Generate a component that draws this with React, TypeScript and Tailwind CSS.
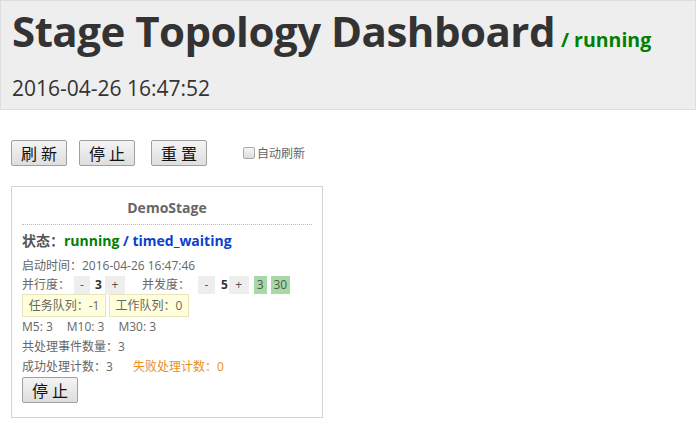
import React from "react";

const font = { fontFamily: '"Open Sans", "Noto Sans CJK SC", sans-serif' };

function Btn({ children, className = "" }: { children: React.ReactNode; className?: string }) {
  return (
    <button
      className={
        "h-[26px] w-[56px] rounded-[2px] border border-[#a0a0a0] bg-gradient-to-b from-[#f4f4f4] to-[#dedede] text-[16px] leading-none tracking-[4px] pl-[4px] text-[#111] " +
        className
      }
      style={{ fontFamily: '"Noto Sans CJK SC", sans-serif' }}
    >
      {children}
    </button>
  );
}

function Mini({ children, className = "", green = false }: { children: React.ReactNode; className?: string; green?: boolean }) {
  return (
    <span
      className={
        "inline-flex h-[18px] items-center justify-center text-[#555] " +
        (green ? "bg-[#a6d9a6] " : "bg-[#eeeeee] ") +
        className
      }
    >
      {children}
    </span>
  );
}

export default function App() {
  return (
    <div className="min-h-[440px] w-[696px] bg-white text-[#333]" style={font}>
      <div className="h-[110px] border border-[#dddddd] bg-[#eeeeee] px-[11px]">
        <div className="flex items-baseline pt-[2px]">
          <span className="text-[42px] font-bold leading-[56px] tracking-[-0.5px] text-[#333]">
            Stage Topology Dashboard
          </span>
          <span className="ml-[6px] text-[19.5px] font-bold text-[#008000]">/ running</span>
        </div>
        <div className="mt-[14px] text-[21px] leading-[30px] text-[#333]">2016-04-26 16:47:52</div>
      </div>

      <div className="mt-[30px] flex items-center pl-[11px]">
        <Btn>刷新</Btn>
        <Btn className="ml-[12px]">停止</Btn>
        <Btn className="ml-[16px]">重置</Btn>
        <label className="ml-[36px] flex items-center text-[12px] text-[#666]" style={{ fontFamily: '"Noto Sans CJK SC", sans-serif' }}>
          <span className="inline-block h-[12px] w-[12px] rounded-[2px] border border-[#aaa] bg-gradient-to-b from-[#f6f6f6] to-[#dcdcdc]" />
          <span className="ml-[2px]">自动刷新</span>
        </label>
      </div>

      <div className="ml-[11px] mt-[20px] h-[232px] w-[312px] border border-[#d4d4d4] px-[10px] pt-[10px] text-[12px] text-[#666]">
        <div className="text-center text-[14px] font-bold leading-[22px] text-[#666]">DemoStage</div>
        <div className="mt-[5px] border-b border-dotted border-[#bbb]" />
        <div className="mt-[5px] text-[14px] font-bold leading-[20px]">
          <span className="text-[#555]" style={{ fontFamily: '"Noto Sans CJK SC", sans-serif' }}>状态：</span>
          <span className="text-[#008000]">running</span>
          <span className="text-[#0b3fcc]"> / timed_waiting</span>
        </div>
        <div className="mt-[5px] leading-[20px]">启动时间：2016-04-26 16:47:46</div>
        <div className="flex h-[18px] items-center leading-none">
          <span>并行度：</span>
          <Mini className="ml-[4px] w-[16px]">-</Mini>
          <span className="ml-[5px] font-bold text-[#333]">3</span>
          <Mini className="ml-[3px] w-[20px]">+</Mini>
          <span className="ml-[17px]">并发度：</span>
          <Mini className="ml-[8px] w-[17px]">-</Mini>
          <span className="ml-[6px] font-bold text-[#333]">5</span>
          <Mini className="ml-[1px] w-[20px]">+</Mini>
          <Mini green className="ml-[5px] w-[13px]">3</Mini>
          <Mini green className="ml-[4px] w-[19px]">30</Mini>
        </div>
        <div className="flex">
          <span className="flex h-[23px] w-[84px] items-center justify-center border border-[#e8e6b8] bg-[#ffffdd]">任务队列：-1</span>
          <span className="ml-[3px] flex h-[23px] w-[80px] items-center justify-center border border-[#e8e6b8] bg-[#ffffdd]">工作队列：0</span>
        </div>
        <div className="leading-[20px]">
          M5: 3<span className="ml-[14px]">M10: 3</span>
          <span className="ml-[14px]">M30: 3</span>
        </div>
        <div className="leading-[20px]">共处理事件数量：3</div>
        <div className="leading-[20px]">
          成功处理计数：3<span className="ml-[20px] text-[#e8901a]">失败处理计数：0</span>
        </div>
        <Btn>停止</Btn>
      </div>
    </div>
  );
}
